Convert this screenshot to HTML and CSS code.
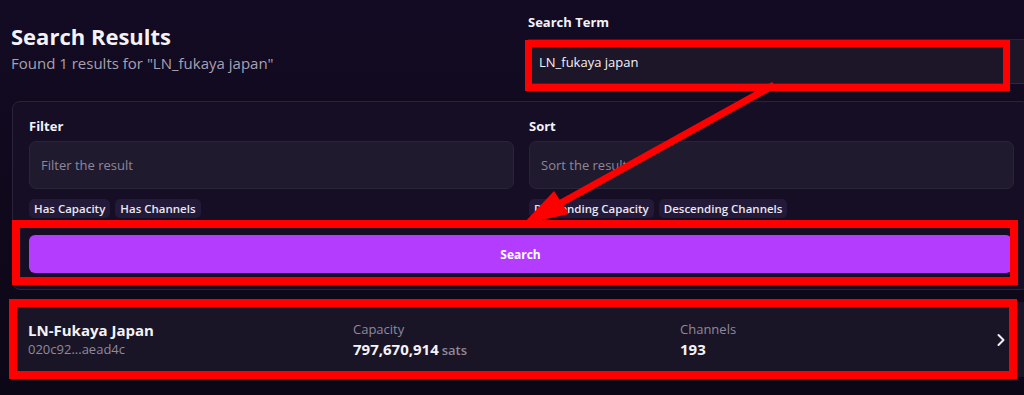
FILE: index.html
```html
<!DOCTYPE html>
<html lang="en">
<head>
  <meta charset="UTF-8">
  <title>Search Results</title>
  <link rel="stylesheet" href="styles.css">
</head>
<body>
  <div class="page">
    <div class="header">
      <div class="heading">
        <h1>Search Results</h1>
        <p class="found">Found 1 results for "LN_fukaya japan"</p>
      </div>
      <div class="term">
        <label class="label">Search Term</label>
        <div class="term-input">LN_fukaya japan</div>
      </div>
    </div>

    <div class="panel">
      <div class="cols">
        <div class="col">
          <label class="label">Filter</label>
          <div class="field">Filter the result</div>
          <div class="chips">
            <span class="chip">Has Capacity</span>
            <span class="chip">Has Channels</span>
          </div>
        </div>
        <div class="col">
          <label class="label">Sort</label>
          <div class="field">Sort the result</div>
          <div class="chips">
            <span class="chip">Descending Capacity</span>
            <span class="chip">Descending Channels</span>
          </div>
        </div>
      </div>
      <button class="search-btn">Search</button>
    </div>

    <div class="result">
      <div class="cell">
        <div class="name">LN-Fukaya Japan</div>
        <div class="muted">020c92...aead4c</div>
      </div>
      <div class="cell">
        <div class="muted">Capacity</div>
        <div class="value">797,670,914<span class="unit">sats</span></div>
      </div>
      <div class="cell">
        <div class="muted">Channels</div>
        <div class="value">193</div>
      </div>
      <svg class="chevron" width="10" height="14" viewBox="0 0 10 14">
        <path d="M2.5 2 L7.5 7 L2.5 12" fill="none" stroke="#f2eff7" stroke-width="2" stroke-linecap="round" stroke-linejoin="round"/>
      </svg>
    </div>
  </div>

  <!-- annotations drawn over the screenshot -->
  <div class="mark mark-term"></div>
  <div class="mark mark-button"></div>
  <div class="mark mark-result"></div>
  <svg class="arrow" width="1024" height="395" viewBox="0 0 1024 395">
    <line x1="774" y1="85" x2="552" y2="208" stroke="#ff0000" stroke-width="7"/>
    <polygon points="523,224 554,191 569,214" fill="#ff0000"/>
  </svg>
</body>
</html>
```

FILE: styles.css
```css
body {
  margin: 0;
  font-family: "Open Sans", "Noto Sans", sans-serif;
  background: linear-gradient(#130b23, #0c0716);
  color: #f4f2f8;
  overflow: hidden;
  height: 395px;
}
.page {
  width: 1017px;
  padding-left: 12px;
}
.header {
  display: flex;
  height: 101px;
}
.heading {
  width: 516px;
  padding-top: 21px;
}
h1 {
  margin: 0 0 0 -1px;
  font-size: 22px;
  font-weight: 700;
  line-height: 30px;
}
.found {
  margin: 1px 0 0 -1px;
  font-size: 15px;
  line-height: 22px;
  color: #a7a1b3;
}
.term {
  padding-top: 12px;
  flex: 1;
}
.label {
  display: block;
  font-size: 13px;
  font-weight: 700;
  line-height: 20px;
  color: #f4f2f8;
}
.term-input {
  margin-top: 7px;
  height: 45px;
  box-sizing: border-box;
  padding-left: 11px;
  display: flex;
  align-items: center;
  font-size: 13px;
  background: #1d1629;
  border-top: 1px solid #2a2338;
  border-bottom: 1px solid #2e2740;
  margin-right: -20px;
}
.panel {
  box-sizing: border-box;
  width: 1017px;
  padding: 13px 16px 16px;
  background: #150e24;
  border: 1px solid #2a2339;
  border-radius: 8px;
}
.cols {
  display: grid;
  grid-template-columns: 485px 485px;
  gap: 15px;
}
.col .label {
  line-height: 22px;
}
.field {
  margin-top: 4px;
  height: 48px;
  box-sizing: border-box;
  padding-left: 11px;
  display: flex;
  align-items: center;
  font-size: 13px;
  color: #8d879a;
  background: #201a2e;
  border: 1px solid #2a2438;
  border-radius: 7px;
}
.chips {
  display: flex;
  gap: 5px;
  margin-top: 10px;
}
.chip {
  font-size: 11.5px;
  font-weight: 600;
  line-height: 19px;
  padding: 0 5px;
  background: #221a38;
  border-radius: 5px;
  color: #ebe7f3;
}
.search-btn {
  display: block;
  width: 100%;
  height: 38px;
  margin-top: 17px;
  border: 0;
  border-radius: 6px;
  background: #b43cff;
  color: #ffffff;
  font-family: inherit;
  font-size: 12px;
  font-weight: 700;
}
.result {
  margin-top: 12px;
  box-sizing: border-box;
  width: 1017px;
  height: 75px;
  padding: 0 16px;
  display: grid;
  grid-template-columns: 325px 327px 1fr auto;
  align-items: center;
  background: #1a1526;
  border-radius: 6px;
}
.name {
  font-size: 15px;
  font-weight: 700;
  line-height: 20px;
}
.muted {
  font-size: 13px;
  line-height: 19px;
  color: #8f899b;
}
.value {
  font-size: 15px;
  font-weight: 700;
  line-height: 20px;
}
.unit {
  margin-left: 3px;
  font-size: 13px;
  font-weight: 600;
  color: #8f899b;
}
.chevron {
  margin-right: 7px;
}
.mark {
  position: absolute;
  border: 7px solid #ff0000;
  box-sizing: border-box;
}
.mark-term {
  left: 525px;
  top: 40px;
  width: 485px;
  height: 51px;
}
.mark-button {
  left: 12px;
  top: 220px;
  width: 1006px;
  height: 65px;
  border-width: 8px;
}
.mark-result {
  left: 9px;
  top: 299px;
  width: 1008px;
  height: 80px;
  border-width: 8px;
}
.arrow {
  position: absolute;
  left: 0;
  top: 0;
}
```
